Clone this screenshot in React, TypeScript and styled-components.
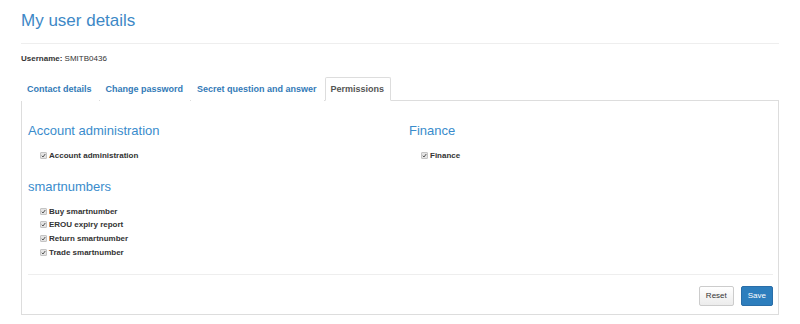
import { createGlobalStyle, styled } from 'styled-components';

const GlobalStyle = createGlobalStyle`
  html, body {
    margin: 0;
    padding: 0;
    background: #fff;
  }

  body {
    font-family: 'Liberation Sans', Arial, Helvetica, sans-serif;
    color: #333;
  }
`;

interface Permission {
  label: string;
  checked: boolean;
}

interface Group {
  title: string;
  items: Permission[];
}

const leftGroups: Group[] = [
  { title: 'Account administration', items: [{ label: 'Account administration', checked: true }] },
  {
    title: 'smartnumbers',
    items: [
      { label: 'Buy smartnumber', checked: true },
      { label: 'EROU expiry report', checked: true },
      { label: 'Return smartnumber', checked: true },
      { label: 'Trade smartnumber', checked: true },
    ],
  },
];

const rightGroups: Group[] = [{ title: 'Finance', items: [{ label: 'Finance', checked: true }] }];

const tabs = ['Contact details', 'Change password', 'Secret question and answer', 'Permissions'];

const PageLayout = styled.div`
  display: flex;
  flex-direction: column;

  padding: 11px 21px 0 21px;
`;

const Title = styled.h1`
  margin: 0;

  color: #3d88c6;
  font-size: 17px;
  font-weight: normal;
  line-height: 20px;
`;

const Divider = styled.div`
  height: 1px;
  margin-top: 12px;

  background: #eee;
`;

const UserLine = styled.div`
  margin-top: 10px;

  font-size: 8px;
  line-height: 10px;
  color: #333;
`;

const TabList = styled.div`
  display: flex;

  margin-top: 13px;
  border-bottom: 1px solid #ddd;
`;

const Tab = styled.div<{ $active?: boolean }>`
  box-sizing: border-box;
  height: 24px;
  margin-bottom: -1px;
  padding: 0 6px 0 5px;
  margin-right: 1px;
  border: 1px solid ${({ $active }) => ($active ? '#ddd' : 'transparent')};
  border-bottom-color: ${({ $active }) => ($active ? '#fff' : 'transparent')};
  border-radius: 2px 2px 0 0;

  background: #fff;

  color: ${({ $active }) => ($active ? '#555' : '#337ab7')};
  font-size: 9px;
  font-weight: bold;
  line-height: 22px;
`;

const Panel = styled.div`
  padding: 6px 5px 8px 6px;
  border: 1px solid #ddd;
  border-top: none;
`;

const Columns = styled.div`
  display: grid;
  grid-template-columns: 381px 1fr;
`;

const Column = styled.div`
  display: flex;
  flex-direction: column;
`;

const GroupBox = styled.div`
  display: flex;
  flex-direction: column;

  margin-top: 16px;
`;

const GroupTitle = styled.h3`
  margin: 0;

  color: #3a8ccc;
  font-size: 13px;
  font-weight: normal;
  line-height: 16px;
`;

const ItemList = styled.div`
  display: flex;
  flex-direction: column;

  margin-top: 10px;
  padding-left: 12px;
`;

const ItemRow = styled.div`
  display: flex;
  gap: 2px;
  align-items: center;

  height: 13.6px;

  color: #333;
  font-size: 8px;
  font-weight: bold;
`;

const CheckBox = styled.span`
  display: inline-flex;
  justify-content: center;
  align-items: center;

  box-sizing: border-box;
  width: 7px;
  height: 7px;
  border: 1px solid #c4c4c4;
  border-radius: 1px;

  background: #e4e4e4;
`;

const Footer = styled.div`
  display: flex;
  gap: 7px;
  justify-content: flex-end;

  margin-top: 15px;
  padding-top: 11px;
  border-top: 1px solid #eee;
`;

const Button = styled.button<{ $primary?: boolean }>`
  box-sizing: border-box;
  height: 20px;
  padding: 0 6px;
  border: 1px solid ${({ $primary }) => ($primary ? '#2a6ea8' : '#ccc')};
  border-radius: 2px;

  background: ${({ $primary }) => ($primary ? '#2d7ebd' : 'linear-gradient(#fff, #ececec)')};

  color: ${({ $primary }) => ($primary ? '#fff' : '#333')};
  font-family: inherit;
  font-size: 8px;
  line-height: 18px;
`;

const CheckMark = ({ checked }: { checked: boolean }) => (
  <CheckBox>
    {checked && (
      <svg width="5" height="5" viewBox="0 0 10 10">
        <path d="M1.5 5.5 L4 8 L8.5 2" fill="none" stroke="#555" strokeWidth="2" />
      </svg>
    )}
  </CheckBox>
);

const GroupBlock = ({ group }: { group: Group }) => (
  <GroupBox>
    <GroupTitle>{group.title}</GroupTitle>
    <ItemList>
      {group.items.map((item) => (
        <ItemRow key={item.label}>
          <CheckMark checked={item.checked} />
          {item.label}
        </ItemRow>
      ))}
    </ItemList>
  </GroupBox>
);

const App = () => (
  <>
    <GlobalStyle />
    <PageLayout>
      <Title>My user details</Title>
      <Divider />
      <UserLine>
        <b>Username:</b> SMITB0436
      </UserLine>
      <TabList>
        {tabs.map((tab) => (
          <Tab key={tab} $active={tab === 'Permissions'}>
            {tab}
          </Tab>
        ))}
      </TabList>
      <Panel>
        <Columns>
          <Column>
            {leftGroups.map((g) => (
              <GroupBlock key={g.title} group={g} />
            ))}
          </Column>
          <Column>
            {rightGroups.map((g) => (
              <GroupBlock key={g.title} group={g} />
            ))}
          </Column>
        </Columns>
        <Footer>
          <Button>Reset</Button>
          <Button $primary>Save</Button>
        </Footer>
      </Panel>
    </PageLayout>
  </>
);

export default App;
